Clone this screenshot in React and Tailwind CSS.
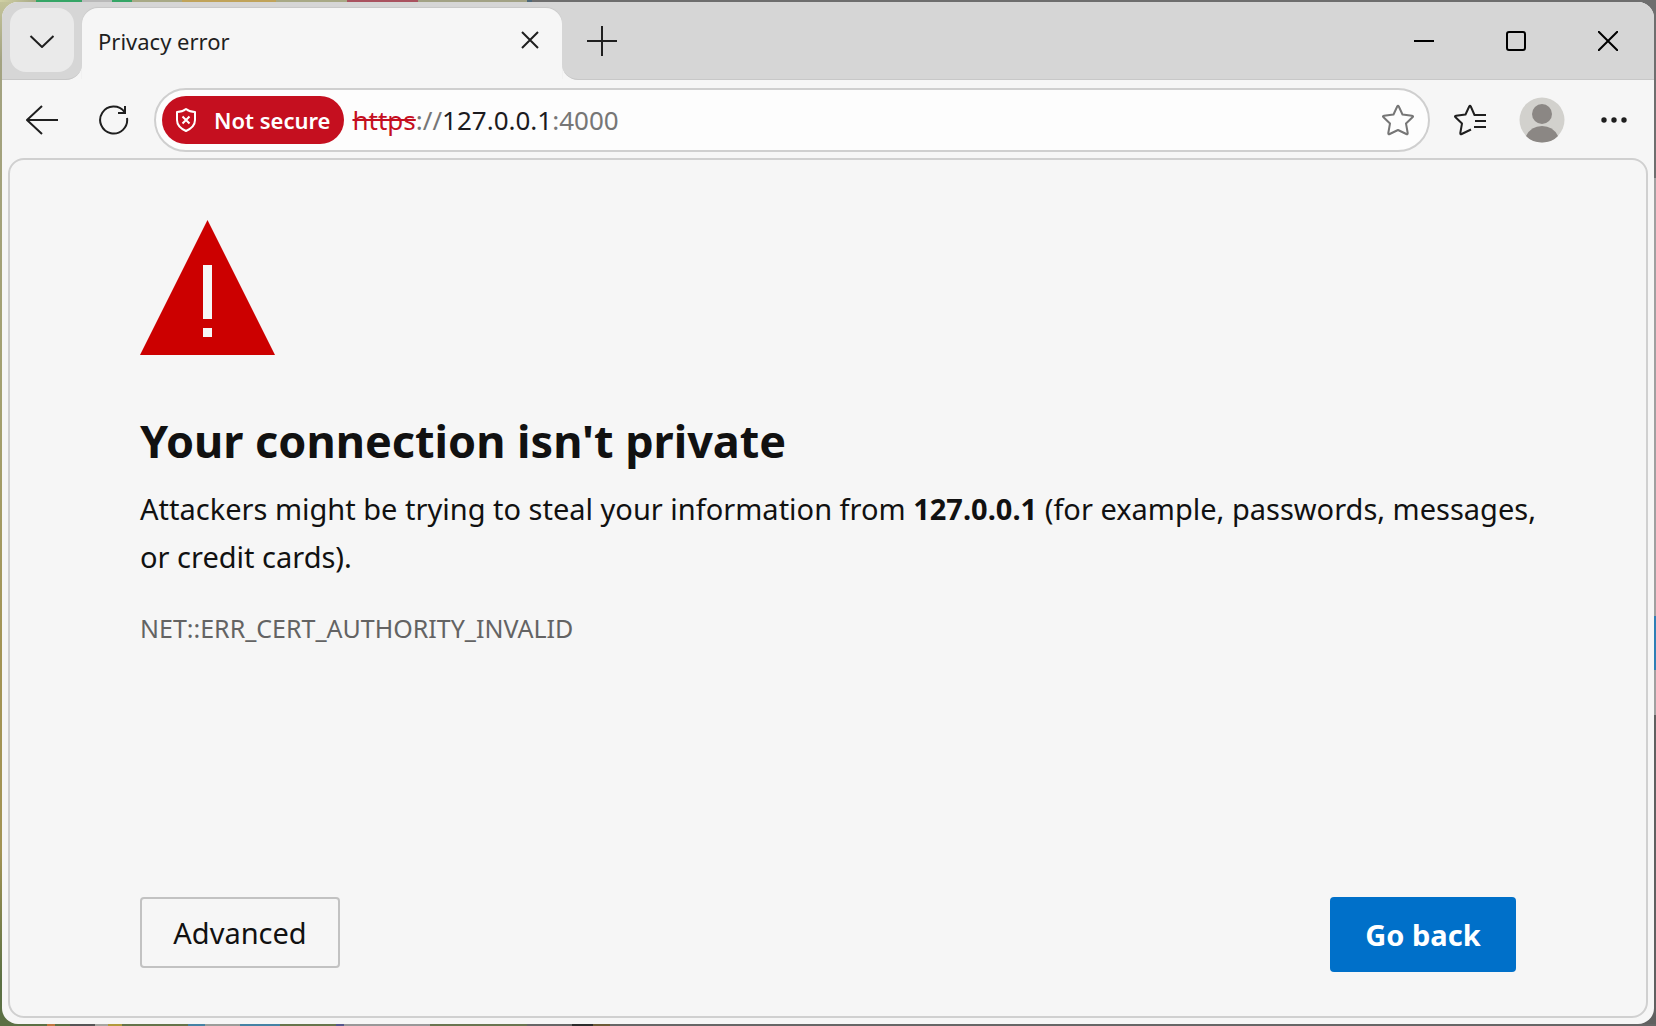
import React from "react";

function ShieldIcon() {
  return (
    <svg width="24" height="26" viewBox="0 0 24 26" fill="none" stroke="currentColor" strokeWidth="2" aria-hidden="true">
      <path d="M12 2C9.500 4 6 5 3 5V13C3 18 6.500 21.500 12 24C17.500 21.500 21 18 21 13V5C18 5 14.500 4 12 2Z" strokeLinejoin="round" />
      <path d="M8.500 9.500L15.500 16.500M15.500 9.500L8.500 16.500" />
    </svg>
  );
}

function StarIcon() {
  return (
    <svg width="34" height="34" viewBox="0 0 34 34" fill="none" stroke="currentColor" strokeWidth="2" strokeLinejoin="round" aria-hidden="true">
      <path d="M15.200 3.500Q16 2 16.800 3.500L20.500 11.500L30 12.700Q31.800 13 30.500 14.300L24 20.500L25.700 30Q25.800 31.800 24.300 31L16 27L7.700 31Q6.200 31.800 6.300 30L8 20.500L1.500 14.300Q0.200 13 2 12.700L11.500 11.500Z" />
    </svg>
  );
}

function FavoritesIcon() {
  return (
    <svg width="34" height="34" viewBox="0 0 34 34" fill="none" stroke="currentColor" strokeWidth="2" strokeLinejoin="round" aria-hidden="true">
      <path d="M18 26.500L8.700 31Q7.200 31.800 7.300 30L9 20.500L2.500 14.300Q1.200 13 3 12.700L12.500 11.500L16.200 3.500Q17 2 17.800 3.500L21.500 12H33" />
      <path d="M22 18H33M21 24H33" />
    </svg>
  );
}

function AvatarIcon() {
  return (
    <svg width="46" height="46" viewBox="0 0 46 46" aria-hidden="true">
      <circle cx="23" cy="23" r="22.500" fill="#d2d1cd" />
      <circle cx="23" cy="17" r="10" fill="#8b8784" />
      <path d="M7 39Q12 29 23 29Q34 29 39 39Q33 45.500 23 45.500Q13 45.500 7 39Z" fill="#8b8784" />
    </svg>
  );
}

function WarningIcon() {
  return (
    <svg width="135" height="135" viewBox="0 0 135 135" role="img" aria-label="Warning">
      <path d="M67.500 0L135 135H0Z" fill="#cc0000" />
      <path d="M63 45H72V99H63ZM63 108H72V117H63Z" fill="#f6f6f6" />
    </svg>
  );
}

function TabStrip() {
  return (
    <header className="flex h-[78px]">
      <div className="w-20 shrink-0 rounded-br-2xl border-b border-[#c8c8c8] bg-[#d6d6d6] pt-1.5 pl-2">
        <button type="button" aria-label="Search tabs" className="flex h-16 w-16 items-center justify-center rounded-2xl bg-[#eaeaea] pt-1">
          <svg width="26" height="16" viewBox="0 0 26 16" fill="none" stroke="currentColor" strokeWidth="2" aria-hidden="true">
            <path d="M1.500 2L13 13L24.500 2" strokeLinejoin="round" />
          </svg>
        </button>
      </div>
      <div className="w-[480px] bg-[linear-gradient(#d6d6d6_40px,#f6f6f6_40px)] pt-1.5">
        <div className="flex h-full items-center justify-between rounded-t-2xl bg-[#f6f6f6] pr-5 pb-2 pl-4 shadow-[0_-1px_1px_#c8c8c8]">
          <span className="pt-0.5 text-[22px]">Privacy error</span>
          <button type="button" aria-label="Close tab" className="flex h-6 w-6 items-center justify-center">
            <svg width="18" height="18" viewBox="0 0 18 18" fill="none" stroke="currentColor" strokeWidth="2" aria-hidden="true">
              <path d="M1 1L17 17M17 1L1 17" />
            </svg>
          </button>
        </div>
      </div>
      <div className="flex grow justify-between rounded-bl-2xl border-b border-[#c8c8c8] bg-[#d6d6d6]">
        <button type="button" aria-label="New tab" className="flex w-20 items-center justify-center">
          <svg width="30" height="30" viewBox="0 0 30 30" fill="none" stroke="currentColor" strokeWidth="2" aria-hidden="true">
            <path d="M15 0V30M0 15H30" />
          </svg>
        </button>
        <div className="flex text-black">
          <button type="button" aria-label="Minimize" className="flex w-[92px] items-center justify-center">
            <svg width="20" height="20" viewBox="0 0 20 20" stroke="currentColor" strokeWidth="2" aria-hidden="true">
              <path d="M0 10H20" />
            </svg>
          </button>
          <button type="button" aria-label="Maximize" className="flex w-[92px] items-center justify-center">
            <svg width="20" height="20" viewBox="0 0 20 20" fill="none" stroke="currentColor" strokeWidth="2" aria-hidden="true">
              <rect x="1" y="1" width="18" height="18" rx="2" />
            </svg>
          </button>
          <button type="button" aria-label="Close" className="flex w-[92px] items-center justify-center">
            <svg width="20" height="20" viewBox="0 0 20 20" fill="none" stroke="currentColor" strokeWidth="2" aria-hidden="true">
              <path d="M0 0L20 20M20 0L0 20" />
            </svg>
          </button>
        </div>
      </div>
    </header>
  );
}

function Toolbar() {
  return (
    <nav className="flex h-[78px] items-center pt-0.5">
      <button type="button" aria-label="Back" className="flex h-12 w-20 items-center justify-center">
        <svg width="32" height="30" viewBox="0 0 32 30" fill="none" stroke="currentColor" strokeWidth="2" aria-hidden="true">
          <path d="M32 15H1M16 1L1 15L16 29" strokeLinejoin="round" />
        </svg>
      </button>
      <button type="button" aria-label="Refresh" className="flex h-12 w-16 items-center justify-center">
        <svg width="30" height="30" viewBox="0 0 30 30" fill="none" stroke="currentColor" strokeWidth="2" aria-hidden="true">
          <path d="M28 13A13.500 13.500 0 1 1 25.500 7" />
          <path d="M26 1V8H19" />
        </svg>
      </button>
      <div className="ml-2 flex h-16 grow items-center rounded-full border-2 border-[#cfcfcf] bg-[#fdfdfd] pr-3 pl-1.5">
        <button type="button" className="flex h-12 items-center gap-4 rounded-full bg-[#c50f1f] pr-3.5 pl-3 text-white">
          <ShieldIcon />
          <span className="text-[22px] font-semibold">Not secure</span>
        </button>
        <div
          role="textbox"
          aria-label="Address"
          contentEditable
          suppressContentEditableWarning
          className="ml-2 grow text-[26px] text-[#767676] outline-none"
        >
          <span className="text-[#c50f1f] line-through">https</span>://<span className="text-[#1b1b1f]">127.0.0.1</span>:4000
        </div>
        <button type="button" aria-label="Add to favorites" className="text-[#767676]">
          <StarIcon />
        </button>
      </div>
      <button type="button" aria-label="Favorites" className="flex w-20 justify-center">
        <FavoritesIcon />
      </button>
      <button type="button" aria-label="Profile" className="flex w-16 justify-center">
        <AvatarIcon />
      </button>
      <button type="button" aria-label="Settings and more" className="flex w-20 justify-center">
        <svg width="26" height="6" viewBox="0 0 26 6" fill="currentColor" aria-hidden="true">
          <circle cx="3" cy="3" r="2.700" />
          <circle cx="13" cy="3" r="2.700" />
          <circle cx="23" cy="3" r="2.700" />
        </svg>
      </button>
    </nav>
  );
}

function PrivacyError() {
  return (
    <main className="mx-1.5 mb-1.5 flex grow flex-col rounded-2xl border-2 border-[#d0d0d0] px-[130px] pt-[60px] pb-11 text-[#111111]">
      <WarningIcon />
      <h1 className="mt-[52px] text-[45px] leading-[68px] font-bold">Your connection isn't private</h1>
      <p className="mt-2.5 -mr-7 text-[29px] leading-[48px]">
        Attackers might be trying to steal your information from <strong>127.0.0.1</strong> (for example, passwords,
        messages, or credit cards).
      </p>
      <p className="mt-6 text-[25px] leading-[46px] text-[#636363]">NET::ERR_CERT_AUTHORITY_INVALID</p>
      <div className="mt-auto flex items-start justify-between text-[29px]">
        <button type="button" className="h-[71px] w-[200px] rounded border-2 border-[#c2c2c2]">
          Advanced
        </button>
        <button type="button" className="h-[75px] w-[186px] rounded bg-[#0070c9] font-bold text-white">
          Go back
        </button>
      </div>
    </main>
  );
}

// slivers of the desktop that show round the window
const desktop =
  "[background:linear-gradient(90deg,#d0d0a4_0,#a8a986_36px,#35a566_36px,#35a566_82px,#b9b9b9_82px,#b9b9b9_112px,#35a566_112px,#35a566_132px,#a8a986_132px,#a8a986_182px,#c0a35a_182px,#c0a35a_276px,#a8a986_276px,#a8a986_347px,#a9525f_347px,#a9525f_418px,#a2a285_418px,#a2a285_527px,#4d6878_527px,#4d6878_532px,#6e6e6e_532px)_top/100%_2px_no-repeat,linear-gradient(90deg,#5b7044_47px,#c07840_47px,#c07840_55px,#5b7044_55px,#5b7044_70px,#555_70px,#555_95px,#a5a5a0_95px,#a5a5a0_108px,#b09a3c_108px,#b09a3c_122px,#64744a_122px,#64744a_188px,#4482a4_188px,#4482a4_205px,#9a9d9a_205px,#9a9d9a_240px,#4482a4_240px,#4482a4_280px,#66754c_280px,#66754c_336px,#55588c_336px,#55588c_344px,#989898_344px,#989898_430px,#697550_430px,#697550_527px,#666_527px,#666_572px,#2c2c2c_572px,#2c2c2c_593px,#6b5a38_593px,#6b5a38_610px,#666_610px)_bottom/100%_2px_no-repeat,linear-gradient(#6e6e6e_178px,#a0a0a0_178px,#a0a0a0_616px,#2f7fb5_616px,#2f7fb5_670px,#a0a0a0_670px,#a0a0a0_715px,#606060_715px)_right/50%_100%_no-repeat,linear-gradient(#c4c49a_0,#a3a382_60px,#a3a070_400px,#a39455_650px,#a39455_850px,#5b7044_980px)]";

export default function App() {
  return (
    <div className={`flex min-h-screen p-0.5 font-['Noto_Sans',sans-serif] text-[#1f1f1f] ${desktop}`}>
      <div className="flex grow flex-col overflow-hidden rounded-2xl bg-[#f6f6f6]">
        <TabStrip />
        <Toolbar />
        <PrivacyError />
      </div>
    </div>
  );
}
